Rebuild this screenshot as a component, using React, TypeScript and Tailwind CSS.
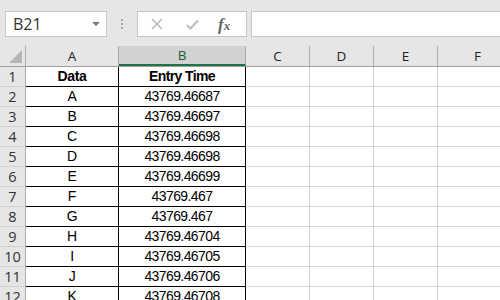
const rows: [string, string][] = [
  ["Data", "Entry Time"],
  ["A", "43769.46687"],
  ["B", "43769.46697"],
  ["C", "43769.46698"],
  ["D", "43769.46698"],
  ["E", "43769.46699"],
  ["F", "43769.467"],
  ["G", "43769.467"],
  ["H", "43769.46704"],
  ["I", "43769.46705"],
  ["J", "43769.46706"],
  ["K", "43769.46708"],
];

const cols = ["A", "B", "C", "D", "E", "F"];

const uiFont = "[font-family:'Open_Sans','Noto_Sans',sans-serif]";
const cellFont = "[font-family:'Liberation_Sans',Arial,sans-serif]";

function FormulaBar() {
  return (
    <div className="flex h-[46px] items-start bg-[#e6e6e6] pt-[11px]">
      <div className="ml-[5px] flex h-[26px] w-[102px] items-center justify-between border border-[#c6c6c6] bg-white pl-[7px] pr-[6px]">
        <span className={`${uiFont} text-[16px] leading-none text-[#333]`}>B21</span>
        <svg width="8" height="5" viewBox="0 0 8 5">
          <polygon points="0,0 8,0 4,4" fill="#7a7a7a" />
        </svg>
      </div>
      <div className="flex h-[26px] w-[30px] flex-col items-center justify-center gap-[2px]">
        <span className="h-[2px] w-[2px] bg-[#a8a8a8]" />
        <span className="h-[2px] w-[2px] bg-[#a8a8a8]" />
        <span className="h-[2px] w-[2px] bg-[#a8a8a8]" />
      </div>
      <div className="flex h-[26px] w-[110px] items-center border border-[#c6c6c6] bg-white">
        <svg className="ml-[13px]" width="12" height="12" viewBox="0 0 12 12">
          <path d="M1 1 L11 11 M11 1 L1 11" stroke="#b4b4b4" strokeWidth="1.4" fill="none" />
        </svg>
        <svg className="ml-[23px]" width="13" height="11" viewBox="0 0 13 11">
          <path d="M1 6 L4.5 9.5 L12 1.5" stroke="#c2c2c2" strokeWidth="2.4" fill="none" />
        </svg>
        <span className="ml-[19px] [font-family:'Liberation_Serif',serif] text-[17px] font-bold italic leading-none text-[#666]">
          f<span className="text-[13px]">x</span>
        </span>
      </div>
      <div className="ml-[4px] h-[26px] flex-1 border border-r-0 border-[#c6c6c6] bg-white" />
    </div>
  );
}

const colWidths = ["w-[93px]", "w-[127px]", "w-[64px]", "w-[64px]", "w-[64px]", "w-[80px]"];

export default function App() {
  return (
    <div className="h-[300px] w-[500px] overflow-hidden bg-white">
      <FormulaBar />
      <div className="flex h-[21px] border-b border-[#9e9e9e] bg-[#e6e6e6]">
        <div className="relative w-[26px] shrink-0 border-r border-[#ababab]">
          <svg className="absolute left-[9px] top-[4px]" width="13" height="13" viewBox="0 0 13 13">
            <polygon points="13,0 13,13 0,13" fill="#b5b5b5" />
          </svg>
        </div>
        {cols.map((c, i) => (
          <div
            key={c}
            className={`${colWidths[i]} flex shrink-0 items-center justify-center ${uiFont} text-[13.5px] ${
              c === "B"
                ? "border-b-2 border-r border-b-[#217346] border-r-[#ababab] bg-[#d2d2d2] text-[#1d5c3a]"
                : "border-r border-[#ababab] text-[#222]"
            }`}
          >
            {c}
          </div>
        ))}
      </div>
      {rows.map((r, ri) => (
        <div key={ri} className="flex h-[20px]">
          <div
            className={`flex w-[26px] shrink-0 items-center justify-center border-b border-r border-b-[#d0d0d0] border-r-[#ababab] bg-[#e6e6e6] ${uiFont} text-[14.5px] text-[#333]`}
          >
            {ri + 1}
          </div>
          <div
            className={`flex w-[93px] shrink-0 items-center justify-center border-b border-r border-black ${cellFont} text-[14px] tracking-[-0.3px] text-black ${
              ri === 0 ? "font-bold" : ""
            }`}
          >
            {r[0]}
          </div>
          <div
            className={`flex w-[127px] shrink-0 items-center justify-center border-b border-r border-black ${cellFont} text-[14px] tracking-[-0.6px] text-black ${
              ri === 0 ? "font-bold" : ""
            }`}
          >
            {r[1]}
          </div>
          <div className="w-[64px] shrink-0 border-b border-r border-[#d4d4d4]" />
          <div className="w-[64px] shrink-0 border-b border-r border-[#d4d4d4]" />
          <div className="w-[64px] shrink-0 border-b border-r border-[#d4d4d4]" />
          <div className="w-[80px] shrink-0 border-b border-r border-[#d4d4d4]" />
        </div>
      ))}
    </div>
  );
}
